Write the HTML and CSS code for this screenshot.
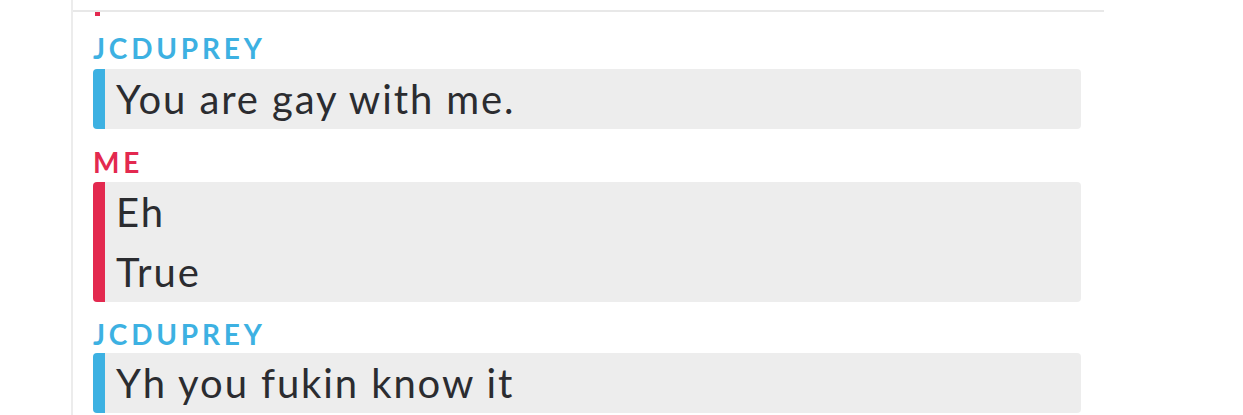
FILE: index.html
```html
<!DOCTYPE html>
<html>
<head>
<meta charset="utf-8">
<link rel="stylesheet" href="styles.css">
</head>
<body>
<div class="chat">
  <div class="prev"><span class="prev-bar"></span></div>
  <div class="group them">
    <div class="name">JCDUPREY</div>
    <div class="msgs">
      <div class="line">You are gay with me.</div>
    </div>
  </div>
  <div class="group me">
    <div class="name">ME</div>
    <div class="msgs">
      <div class="line">Eh</div>
      <div class="line">True</div>
    </div>
  </div>
  <div class="group them">
    <div class="name">JCDUPREY</div>
    <div class="msgs">
      <div class="line">Yh you fukin know it</div>
    </div>
  </div>
</div>
</body>
</html>
```
FILE: styles.css
```css
html, body {
  margin: 0;
  padding: 0;
  background: #fff;
  overflow: hidden;
}
body {
  font-family: "Lato", "Open Sans", sans-serif;
  color: #2b2c30;
}
.chat {
  margin-left: 71px;
  width: 1033px;
  height: 415px;
  border-left: 2px solid #ececec;
  box-sizing: border-box;
}
.prev {
  height: 10px;
  border-bottom: 2px solid #e8e8e8;
  position: relative;
}
.prev-bar {
  position: absolute;
  left: 22px;
  top: 12px;
  width: 5px;
  height: 4px;
  background: #e3294f;
}
.group {
  padding-left: 20px;
  padding-right: 23px;
}
.name {
  height: 57px;
  box-sizing: border-box;
  padding-top: 22px;
  font-size: 28px;
  line-height: 28px;
  font-weight: 700;
  letter-spacing: 3.8px;
}
.group.them + .group.me .name {
  height: 53px;
  padding-top: 19px;
}
.group.me + .group.them .name {
  height: 51px;
  padding-top: 18px;
}
.them .name { color: #3db1e2; }
.me .name { color: #e3294f; }
.msgs {
  background: #ededed;
  border-left: 12px solid;
  border-radius: 4px;
  padding-left: 11px;
}
.them .msgs { border-left-color: #3db1e2; }
.me .msgs { border-left-color: #e3294f; }
.line {
  height: 60px;
  line-height: 60px;
  font-size: 40px;
  letter-spacing: 1.9px;
}
```
